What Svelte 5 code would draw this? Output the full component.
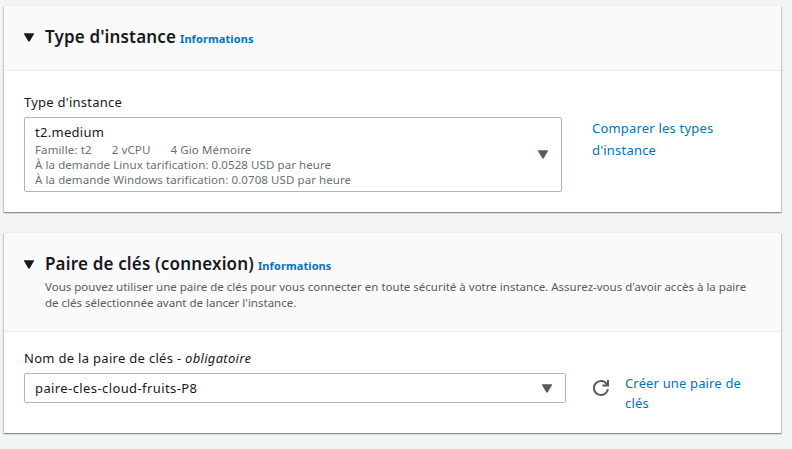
<script>
  const instance = {
    name: 't2.medium',
    specs: ['Famille: t2', '2 vCPU', '4 Gio Mémoire'],
    prices: [
      'À la demande Linux tarification: 0.0528 USD par heure',
      'À la demande Windows tarification: 0.0708 USD par heure'
    ]
  };
</script>

{#snippet caret()}
  <svg class="caret" width="10" height="9" viewBox="0 0 10 9" aria-hidden="true"><path d="M0 .3h10v.7L5.6 8.5H4.4L0 1z" fill="currentColor" /></svg>
{/snippet}

<main>
  <section class="card type">
    <header>
      {@render caret()}
      <div class="heading">
        <h2 class="t1">Type d'instance</h2>
        <a href="#info">Informations</a>
      </div>
    </header>
    <div class="body">
      <div class="field">
        <div class="label l1">Type d'instance</div>
        <div class="select tall">
          <div class="option">
            <div class="name">{instance.name}</div>
            <div class="specs">
              {#each instance.specs as spec}<span>{spec}</span>{/each}
            </div>
            {#each instance.prices as price}<div class="price">{price}</div>{/each}
          </div>
          {@render caret()}
        </div>
      </div>
      <a class="compare" href="#compare">Comparer les types<br />d'instance</a>
    </div>
  </section>

  <section class="card pair">
    <header>
      {@render caret()}
      <div>
        <div class="heading">
          <h2 class="t2">Paire de clés (connexion)</h2>
          <a href="#info2">Informations</a>
        </div>
        <p>Vous pouvez utiliser une paire de clés pour vous connecter en toute sécurité à votre instance. Assurez-vous d'avoir accès à la paire<br />de clés sélectionnée avant de lancer l'instance.</p>
      </div>
    </header>
    <div class="body">
      <div class="field">
        <div class="label l2">Nom de la paire de clés - <em>obligatoire</em></div>
        <div class="select">
          <div class="name key">paire-cles-cloud-fruits-P8</div>
          {@render caret()}
        </div>
      </div>
      <svg class="refresh" width="18" height="18" viewBox="0 0 18 18" fill="none" stroke="currentColor" stroke-width="2" aria-hidden="true">
        <path d="M15.9 10.2A7 7 0 1 1 14.6 4.8L16 6.4" />
        <path d="M16 1v5.5h-5.5" />
      </svg>
      <a class="create" href="#create">Créer une paire de<br />clés</a>
    </div>
  </section>
</main>

<style>
  :global(body) { margin: 0; background: #f2f3f3; }
  main {
    box-sizing: border-box;
    height: 449px;
    padding: 6px 11px 0 4px;
    overflow: hidden;
    background: #f2f3f3;
    color: #16191f;
    font-family: "Noto Sans", sans-serif;
    font-size: 13px;
  }
  a { color: #0073bb; text-decoration: none; }
  .card {
    background: #fff;
    box-shadow: 0 1px 0 0 #879596, 0 1px 1px 0 rgba(0, 28, 36, .3), 1px 1px 1px 0 rgba(0, 28, 36, .15), -1px 1px 1px 0 rgba(0, 28, 36, .15), 0 -1px 0 0 #eaeded;
  }
  .type { height: 206px; }
  .pair { height: 200px; margin-top: 21px; }
  header {
    box-sizing: border-box;
    display: flex;
    gap: 11px;
    height: 65px;
    padding: 18px 20px 0;
    background: #fafafa;
    border-bottom: 1px solid #eaeded;
  }
  .pair header { height: 99px; }
  header .caret { margin-top: 9px; flex: none; }
  .heading { display: flex; align-items: baseline; gap: 4px; height: 26px; line-height: 26px; white-space: nowrap; }
  h2 { margin: 0; font-size: 17px; font-weight: 600; }
  .t1 { letter-spacing: .15px; }
  .t2 { letter-spacing: .17px; }
  .heading a { font-size: 11px; font-weight: 700; letter-spacing: .09px; }
  p { margin: 2px 0 0; font-size: 11.5px; line-height: 16px; letter-spacing: .007px; color: #545b64; white-space: nowrap; }
  .body { display: flex; align-items: flex-start; padding: 21px 20px 0; }
  .pair .body { padding-top: 16px; }
  .label { height: 20px; line-height: 20px; padding-bottom: 5px; white-space: nowrap; }
  .l1 { letter-spacing: .24px; }
  .l2 { letter-spacing: .3px; }
  .select {
    box-sizing: border-box;
    display: flex;
    align-items: center;
    justify-content: space-between;
    width: 542px;
    height: 30px;
    padding: 0 13px 0 10px;
    border: 1px solid #aab7b8;
    border-radius: 2px;
    white-space: nowrap;
  }
  .tall { width: 538px; height: 75px; }
  .select .caret { color: #545b64; }
  .name { line-height: 20px; letter-spacing: .28px; }
  .key { letter-spacing: .4px; }
  .option { color: #687078; font-size: 11.5px; line-height: 15px; }
  .option .name { color: #16191f; font-size: 13px; }
  .specs { display: flex; gap: 20px; letter-spacing: .12px; }
  .price { letter-spacing: .08px; }
  .compare { margin: 25px 0 0 30px; line-height: 22px; letter-spacing: .2px; }
  .refresh { margin: 31px 0 0 26px; color: #545b64; flex: none; }
  .create { margin: 25px 0 0 15px; line-height: 20px; white-space: nowrap; letter-spacing: .15px; }
</style>
